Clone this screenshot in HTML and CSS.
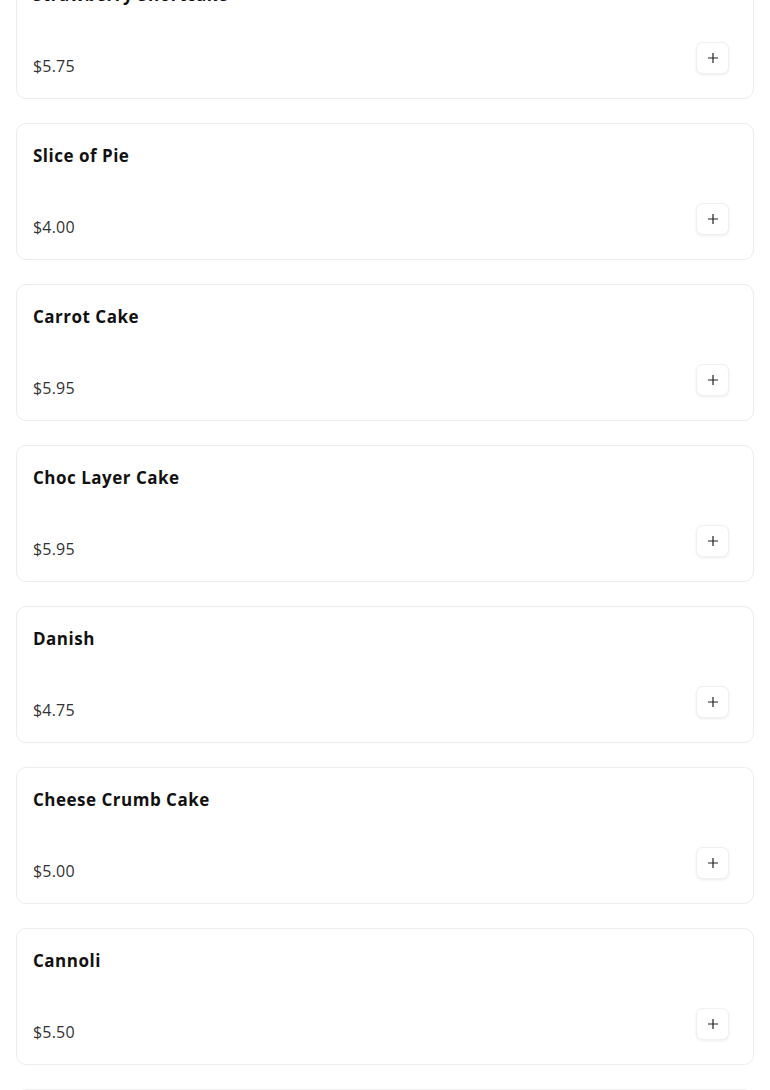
FILE: index.html
```html
<!DOCTYPE html>
<html lang="en">
<head>
  <meta charset="UTF-8">
  <title>Desserts</title>
  <link rel="stylesheet" href="styles.css">
</head>
<body>
  <div class="menu-list">

    <div class="item-card">
      <h3 class="item-name">Strawberry Shortcake</h3>
      <div class="item-foot">
        <span class="item-price">$5.75</span>
        <button class="add-btn" aria-label="Add"><svg width="12" height="12" viewBox="0 0 12 12"><path d="M6 1v10M1 6h10" stroke="#222" stroke-width="1.2"/></svg></button>
      </div>
    </div>

    <div class="item-card">
      <h3 class="item-name">Slice of Pie</h3>
      <div class="item-foot">
        <span class="item-price">$4.00</span>
        <button class="add-btn" aria-label="Add"><svg width="12" height="12" viewBox="0 0 12 12"><path d="M6 1v10M1 6h10" stroke="#222" stroke-width="1.2"/></svg></button>
      </div>
    </div>

    <div class="item-card">
      <h3 class="item-name">Carrot Cake</h3>
      <div class="item-foot">
        <span class="item-price">$5.95</span>
        <button class="add-btn" aria-label="Add"><svg width="12" height="12" viewBox="0 0 12 12"><path d="M6 1v10M1 6h10" stroke="#222" stroke-width="1.2"/></svg></button>
      </div>
    </div>

    <div class="item-card">
      <h3 class="item-name">Choc Layer Cake</h3>
      <div class="item-foot">
        <span class="item-price">$5.95</span>
        <button class="add-btn" aria-label="Add"><svg width="12" height="12" viewBox="0 0 12 12"><path d="M6 1v10M1 6h10" stroke="#222" stroke-width="1.2"/></svg></button>
      </div>
    </div>

    <div class="item-card">
      <h3 class="item-name">Danish</h3>
      <div class="item-foot">
        <span class="item-price">$4.75</span>
        <button class="add-btn" aria-label="Add"><svg width="12" height="12" viewBox="0 0 12 12"><path d="M6 1v10M1 6h10" stroke="#222" stroke-width="1.2"/></svg></button>
      </div>
    </div>

    <div class="item-card">
      <h3 class="item-name">Cheese Crumb Cake</h3>
      <div class="item-foot">
        <span class="item-price">$5.00</span>
        <button class="add-btn" aria-label="Add"><svg width="12" height="12" viewBox="0 0 12 12"><path d="M6 1v10M1 6h10" stroke="#222" stroke-width="1.2"/></svg></button>
      </div>
    </div>

    <div class="item-card">
      <h3 class="item-name">Cannoli</h3>
      <div class="item-foot">
        <span class="item-price">$5.50</span>
        <button class="add-btn" aria-label="Add"><svg width="12" height="12" viewBox="0 0 12 12"><path d="M6 1v10M1 6h10" stroke="#222" stroke-width="1.2"/></svg></button>
      </div>
    </div>

    <div class="item-card">
      <h3 class="item-name">Brownie</h3>
      <div class="item-foot">
        <span class="item-price">$3.50</span>
        <button class="add-btn" aria-label="Add"><svg width="12" height="12" viewBox="0 0 12 12"><path d="M6 1v10M1 6h10" stroke="#222" stroke-width="1.2"/></svg></button>
      </div>
    </div>

  </div>
</body>
</html>
```

FILE: styles.css
```css
body {
  margin: 0;
  font-family: "Open Sans", "Liberation Sans", sans-serif;
  background: #fff;
  color: #111;
}
.menu-list {
  display: flex;
  flex-direction: column;
  gap: 24px;
  padding: 0 16px;
  margin-top: -38px;
}
.item-card {
  border: 1px solid #ececec;
  border-radius: 10px;
  padding: 20px 24px 24px 16px;
  background: #fff;
}
.item-name {
  margin: 0;
  font-size: 17px;
  line-height: 24px;
  font-weight: 700;
  letter-spacing: 0.5px;
  color: #111;
}
.item-foot {
  display: flex;
  justify-content: space-between;
  align-items: flex-end;
  margin-top: 35px;
}
.item-price {
  font-size: 16px;
  line-height: 16px;
  letter-spacing: 0.2px;
  color: #333;
}
.add-btn {
  width: 33px;
  height: 32px;
  padding: 0;
  display: flex;
  align-items: center;
  justify-content: center;
  background: #fff;
  border: 1px solid #f0f0f0;
  border-radius: 7px;
  box-shadow: 0 1px 3px rgba(0, 0, 0, 0.08);
  cursor: pointer;
}
```
